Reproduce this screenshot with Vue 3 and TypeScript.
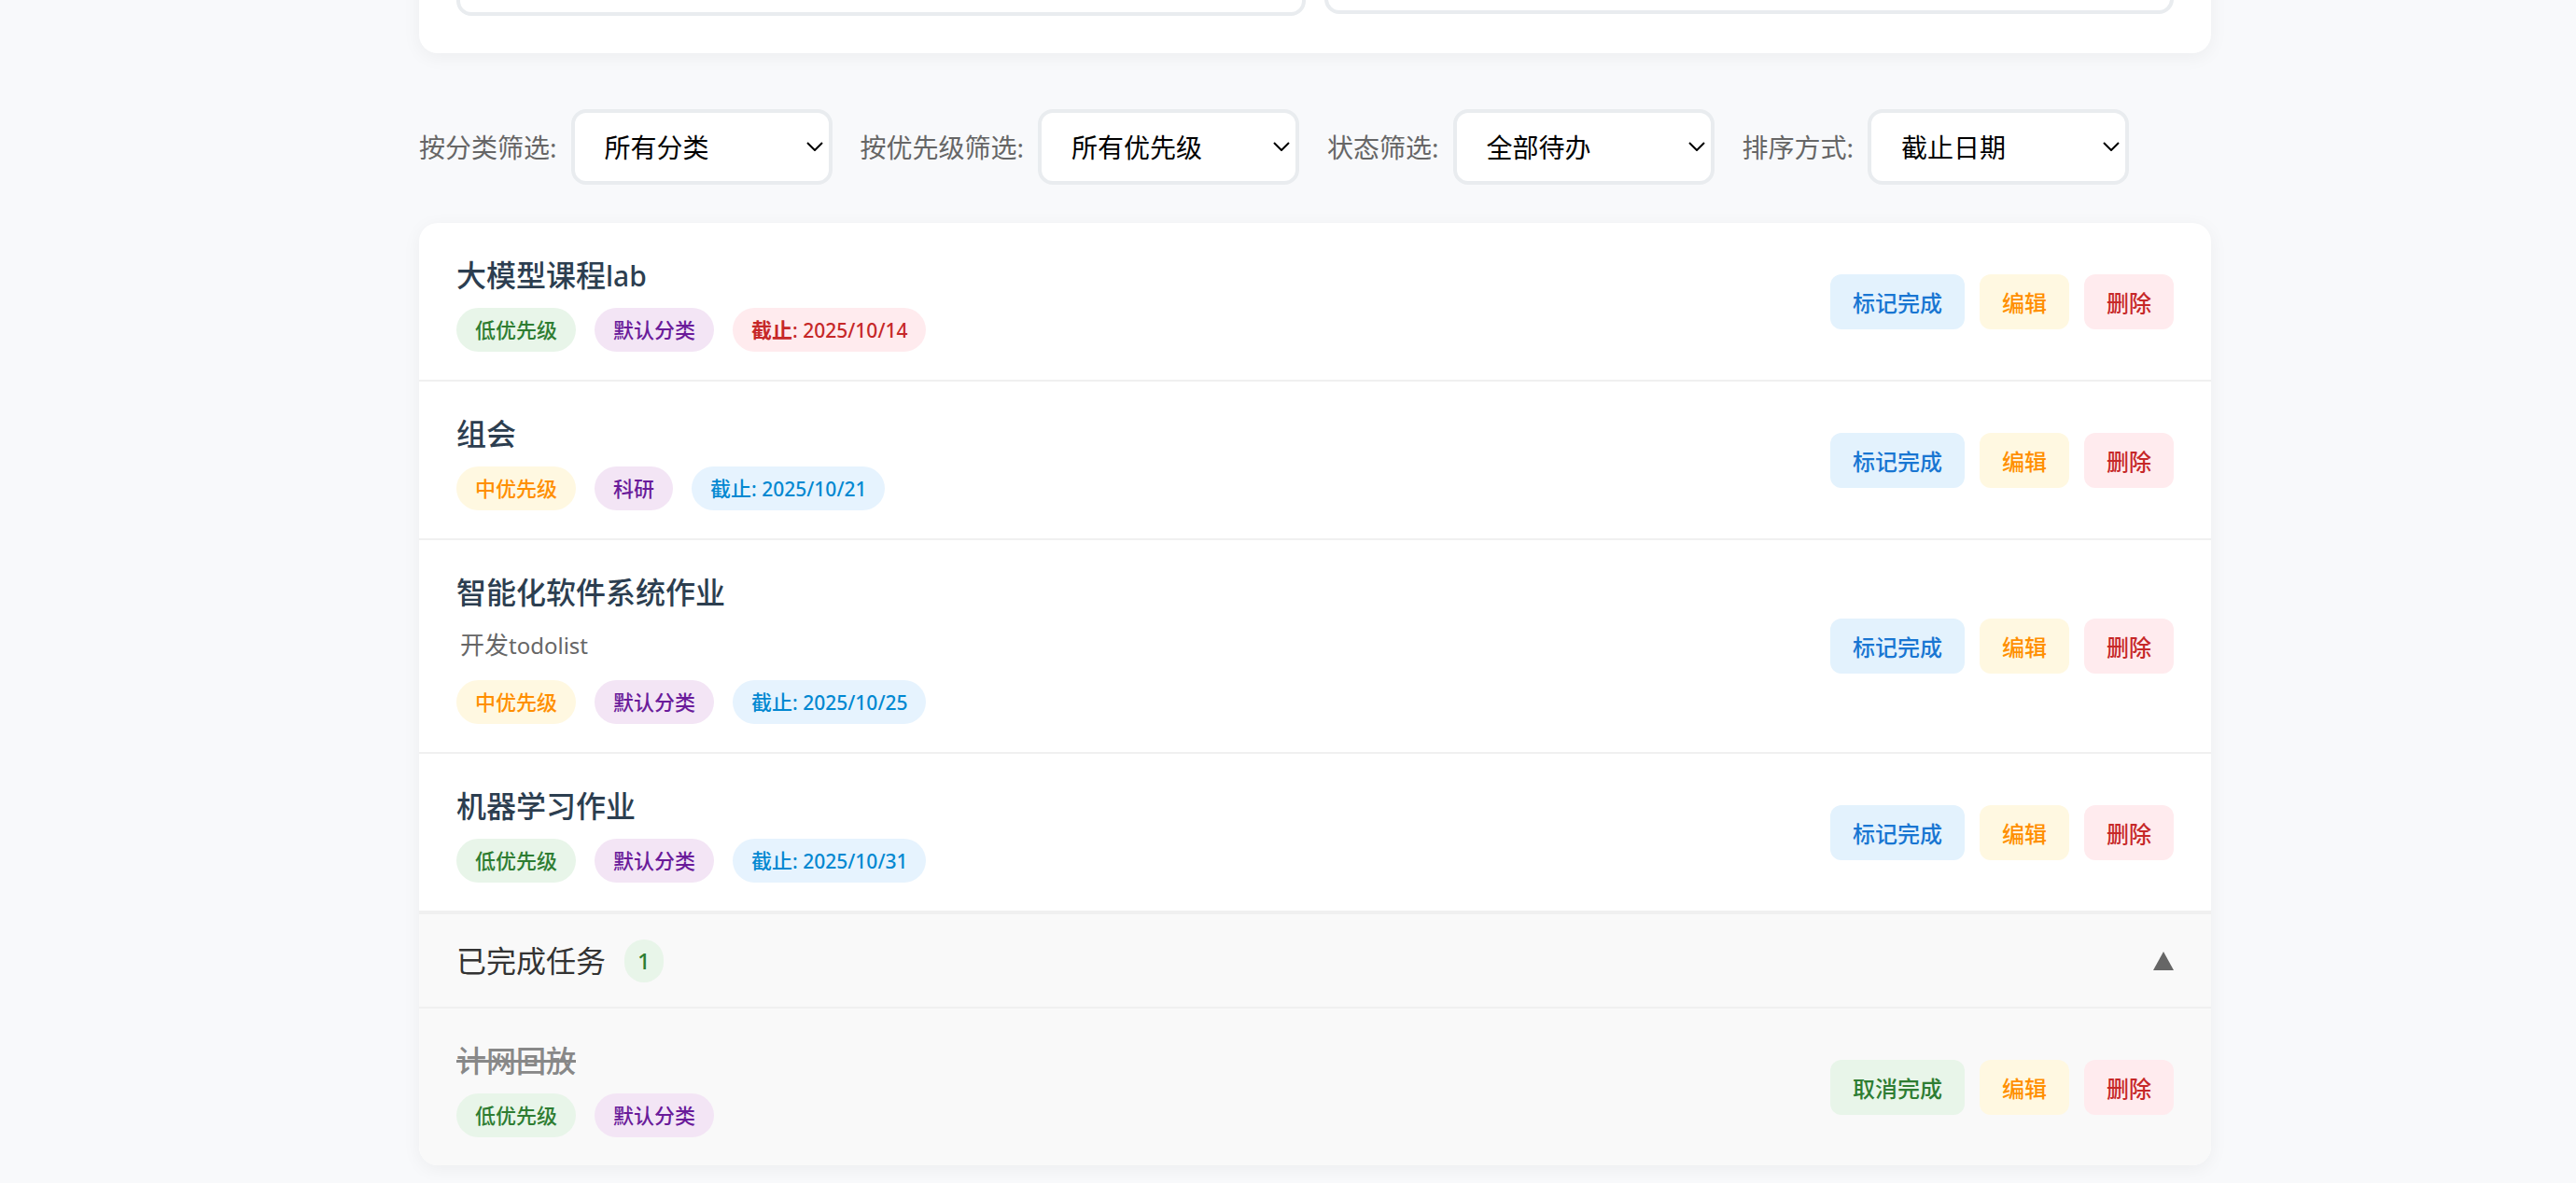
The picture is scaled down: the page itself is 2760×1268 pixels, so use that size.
<script setup lang="ts">
import { computed, ref } from 'vue'

type Priority = 'low' | 'medium' | 'high'

interface Todo {
  id: number
  title: string
  note?: string
  priority: Priority
  category: string
  due?: string
  overdue?: boolean
  done: boolean
}

interface Filter {
  id: string
  label: string
  options: string[]
}

const priorityLabels: Record<Priority, string> = {
  low: '低优先级',
  medium: '中优先级',
  high: '高优先级',
}

const filters: Filter[] = [
  { id: 'category', label: '按分类筛选:', options: ['所有分类', '默认分类', '科研'] },
  { id: 'priority', label: '按优先级筛选:', options: ['所有优先级', '高优先级', '中优先级', '低优先级'] },
  { id: 'status', label: '状态筛选:', options: ['全部待办', '未完成', '已完成'] },
  { id: 'sort', label: '排序方式:', options: ['截止日期', '优先级', '创建时间'] },
]

const todos = ref<Todo[]>([
  { id: 1, title: '大模型课程lab', priority: 'low', category: '默认分类', due: '2025/10/14', overdue: true, done: false },
  { id: 2, title: '组会', priority: 'medium', category: '科研', due: '2025/10/21', done: false },
  { id: 3, title: '智能化软件系统作业', note: '开发todolist', priority: 'medium', category: '默认分类', due: '2025/10/25', done: false },
  { id: 4, title: '机器学习作业', priority: 'low', category: '默认分类', due: '2025/10/31', done: false },
  { id: 5, title: '计网回放', priority: 'low', category: '默认分类', done: true },
])

const showDone = ref(true)
const activeTodos = computed(() => todos.value.filter((t) => !t.done))
const doneTodos = computed(() => todos.value.filter((t) => t.done))

// Latin runs are set one step smaller than the Chinese text around them.
function runs(text: string): { text: string; latin: boolean }[] {
  return (text.match(/[\x00-\x7f]+|[^\x00-\x7f]+/g) ?? []).map((part) => ({
    text: part,
    latin: part.charCodeAt(0) < 128,
  }))
}

function toggle(todo: Todo) {
  todo.done = !todo.done
}

function remove(todo: Todo) {
  todos.value = todos.value.filter((t) => t.id !== todo.id)
}
</script>

<template>
  <main class="page">
    <form class="card form-card" @submit.prevent>
      <select class="field" aria-label="分类">
        <option>默认分类</option>
        <option>科研</option>
      </select>
      <input class="field field-date" type="date" aria-label="截止日期" />
    </form>

    <div class="filters">
      <div v-for="filter in filters" :key="filter.id" class="filter">
        <label :for="filter.id">{{ filter.label }}</label>
        <div class="select-box">
          <select :id="filter.id" class="select">
            <option v-for="option in filter.options" :key="option">{{ option }}</option>
          </select>
          <svg class="chevron" viewBox="0 0 18 10" aria-hidden="true">
            <path d="M1 1 L9 9 L17 1" fill="none" stroke="#000" stroke-width="2" />
          </svg>
        </div>
      </div>
    </div>

    <section class="card list-card">
      <ul class="list">
        <li v-for="todo in activeTodos" :key="todo.id" class="row">
          <div class="info">
            <h3 class="title">
              <span v-for="run in runs(todo.title)" :key="run.text" :class="{ latin: run.latin }">{{ run.text }}</span>
            </h3>
            <p v-if="todo.note" class="note">
              <span v-for="run in runs(todo.note)" :key="run.text" :class="{ latin: run.latin }">{{ run.text }}</span>
            </p>
            <div class="tags">
              <span class="tag" :class="todo.priority">{{ priorityLabels[todo.priority] }}</span>
              <span class="tag category">{{ todo.category }}</span>
              <span v-if="todo.due" class="tag" :class="todo.overdue ? 'overdue' : 'due'">截止<span class="latin">: {{ todo.due }}</span></span>
            </div>
          </div>
          <div class="actions">
            <button type="button" class="btn complete" @click="toggle(todo)">标记完成</button>
            <button type="button" class="btn edit">编辑</button>
            <button type="button" class="btn delete" @click="remove(todo)">删除</button>
          </div>
        </li>
      </ul>

      <div class="done">
        <button type="button" class="done-head" :aria-expanded="showDone" @click="showDone = !showDone">
          <span class="done-title">已完成任务</span>
          <span class="count">{{ doneTodos.length }}</span>
          <svg class="arrow" :class="{ folded: !showDone }" viewBox="0 0 22 20" aria-hidden="true">
            <path d="M11 0 L22 20 H0 Z" fill="#666" />
          </svg>
        </button>
        <ul v-if="showDone" class="list">
          <li v-for="todo in doneTodos" :key="todo.id" class="row">
            <div class="info">
              <h3 class="title struck">{{ todo.title }}</h3>
              <div class="tags">
                <span class="tag" :class="todo.priority">{{ priorityLabels[todo.priority] }}</span>
                <span class="tag category">{{ todo.category }}</span>
              </div>
            </div>
            <div class="actions">
              <button type="button" class="btn undo" @click="toggle(todo)">取消完成</button>
              <button type="button" class="btn edit">编辑</button>
              <button type="button" class="btn delete" @click="remove(todo)">删除</button>
            </div>
          </li>
        </ul>
      </div>
    </section>
  </main>
</template>

<style>
body {
  background: #f8f9fb;
  padding-left: 58px;
}
</style>

<style scoped>
* {
  box-sizing: border-box;
}

.page {
  max-width: 1920px;
  margin: 0 auto;
  padding-bottom: 16px;
  display: flow-root;
  color: #333;
  font-family: "Noto Sans", "Noto Sans CJK SC", sans-serif;
  font-size: 28px;
}

button,
select,
input {
  font-family: inherit;
}

.card {
  background: #fff;
  border-radius: 20px;
  box-shadow: 0 4px 20px rgba(0, 0, 0, 0.05);
}

/* The form is scrolled up, with only its lower edge in view. */
.form-card {
  display: grid;
  grid-template-columns: 1fr 1fr;
  align-items: start;
  gap: 20px;
  margin-top: -104px;
  padding: 40px;
}

.field {
  width: 100%;
  height: 81px;
  padding: 0 32px;
  border: 4px solid #e9ecef;
  border-radius: 16px;
  background: #fff;
  font-size: 28px;
}

.field-date {
  height: 79px;
}

.filters {
  display: flex;
  flex-wrap: wrap;
  gap: 30px;
  margin: 60px 0 41px;
}

.filter {
  display: flex;
  align-items: center;
  gap: 15px;
  color: #666;
}

.filter label {
  padding-bottom: 2px;
}

.select-box {
  position: relative;
}

.select {
  display: block;
  width: 280px;
  height: 81px;
  padding: 0 32px;
  border: 4px solid #e9ecef;
  border-radius: 16px;
  background: #fff;
  color: #000;
  font-size: 28px;
  appearance: none;
}

.chevron {
  position: absolute;
  top: 35px;
  right: 10px;
  width: 18px;
  height: 10px;
  pointer-events: none;
}

.list-card {
  overflow: hidden;
}

.list {
  margin: 0;
  padding: 0;
  list-style: none;
}

.row {
  display: flex;
  align-items: center;
  justify-content: space-between;
  padding: 30px 40px;
  border-bottom: 2px solid #f0f0f0;
}

.info {
  display: flex;
  flex-direction: column;
  gap: 10px;
}

.latin {
  line-height: 1;
}

.title {
  margin: 0;
  color: #2c3e50;
  font-size: 32px;
  font-weight: 500;
  line-height: 51px;
}

.title .latin {
  font-size: 30px;
}

.struck {
  align-self: flex-start;
  color: #888;
  text-decoration: line-through;
}

.note {
  margin: 0 0 7px;
  padding-left: 4px;
  color: #666;
  font-size: 26px;
  line-height: 42px;
}

.note .latin {
  font-size: 24px;
}

.tags {
  display: flex;
  gap: 20px;
}

.tag {
  padding: 6px 20px;
  border-radius: 24px;
  font-size: 22px;
  font-weight: 500;
  line-height: 35px;
  white-space: pre;
}

.tag .latin {
  font-size: 21px;
}

.low {
  background: #e8f5e9;
  color: #2e7d32;
}

.medium {
  background: #fff8e1;
  color: #ff8f00;
}

.high {
  background: #ffebee;
  color: #c62828;
}

.category {
  background: #f3e5f5;
  color: #6a1b9a;
}

.due {
  background: #e6f3fe;
  color: #0288d1;
}

.overdue {
  background: #ffebee;
  color: #c62828;
  font-weight: 700;
}

.overdue .latin {
  font-weight: 500;
}

.actions {
  display: flex;
  gap: 16px;
}

.btn {
  height: 59px;
  padding: 0 24px;
  border: 0;
  border-radius: 12px;
  font-size: 24px;
  font-weight: 500;
  cursor: pointer;
}

.complete {
  background: #e3f2fd;
  color: #1976d2;
}

.undo {
  background: #e8f5e9;
  color: #2e7d32;
}

.edit {
  background: #fff8e1;
  color: #ff8f00;
}

.delete {
  background: #ffebee;
  color: #c62828;
}

.done {
  border-top: 2px solid #f0f0f0;
  background: #f9f9f9;
}

.done .row:last-child {
  border-bottom: 0;
}

.done-head {
  display: flex;
  align-items: center;
  gap: 20px;
  width: 100%;
  padding: 24px 40px;
  border: 0;
  border-bottom: 2px solid #f0f0f0;
  background: none;
  color: #333;
  cursor: pointer;
}

.done-title {
  font-size: 32px;
  line-height: 51px;
}

.count {
  padding: 4px 14px;
  border-radius: 23px;
  background: #e8f5e9;
  color: #2e7d32;
  font-size: 24px;
  font-weight: 500;
  line-height: 38px;
}

.arrow {
  width: 22px;
  height: 20px;
  margin-left: auto;
}

.folded {
  transform: rotate(180deg);
}
</style>
